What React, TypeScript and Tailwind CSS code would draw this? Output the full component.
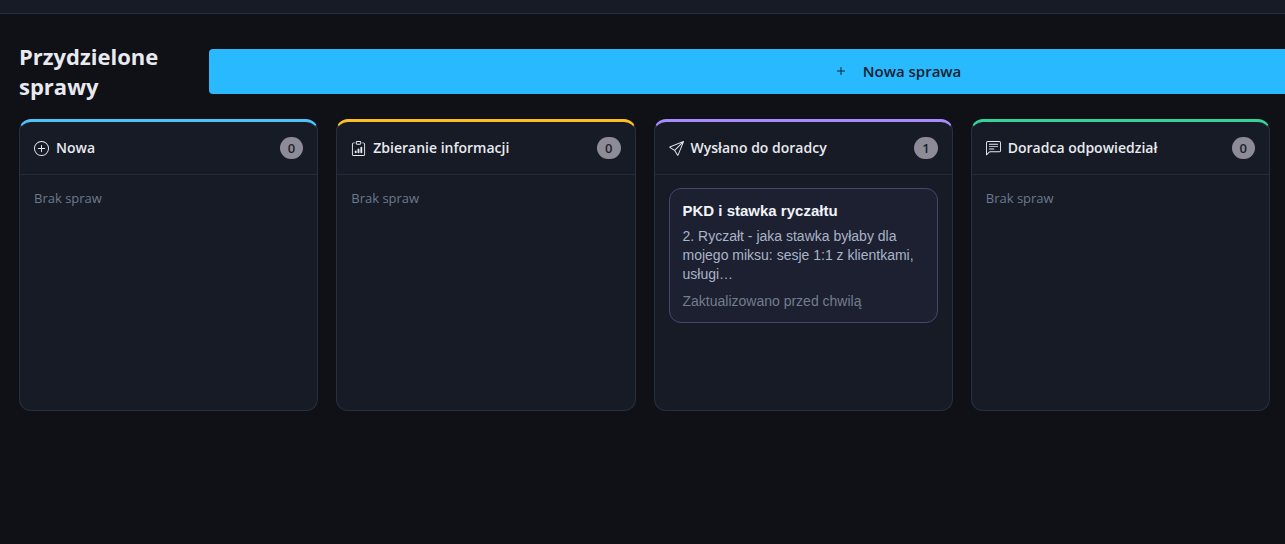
import { BsChatLeftText, BsClipboardData, BsPlus, BsPlusCircle, BsSend } from "react-icons/bs";
import type { IconType } from "react-icons";

interface Sprawa {
  id: string;
  tytul: string;
  opis: string;
  aktualizacja: string;
}

interface Kolumna {
  label: string;
  icon: IconType;
  accent: string;
  sprawy: Sprawa[];
}

const KOLUMNY: Kolumna[] = [
  { label: "Nowa", icon: BsPlusCircle, accent: "border-t-[#4fc3f7]", sprawy: [] },
  { label: "Zbieranie informacji", icon: BsClipboardData, accent: "border-t-[#fbbf24]", sprawy: [] },
  {
    label: "Wysłano do doradcy",
    icon: BsSend,
    accent: "border-t-[#a78bfa]",
    sprawy: [
      {
        id: "pkd",
        tytul: "PKD i stawka ryczałtu",
        opis: "2. Ryczałt - jaka stawka byłaby dla mojego miksu: sesje 1:1 z klientkami, usługi…",
        aktualizacja: "Zaktualizowano przed chwilą",
      },
    ],
  },
  { label: "Doradca odpowiedział", icon: BsChatLeftText, accent: "border-t-[#34d399]", sprawy: [] },
];

function KartaSprawy({ sprawa }: { sprawa: Sprawa }) {
  return (
    <button
      type="button"
      className="block w-full rounded-xl border border-[#4a4570] bg-[#1c2030] px-[13px] pt-3 pb-[11px] text-left font-['Liberation_Sans',sans-serif] text-sm"
    >
      <span className="block text-[15px] leading-5 font-bold text-[#f1f3f8]">{sprawa.tytul}</span>
      <span className="mt-1.5 block leading-[19px] text-[#a9b4c8]">{sprawa.opis}</span>
      <span className="mt-2 block leading-[19px] text-[#737d8f]">{sprawa.aktualizacja}</span>
    </button>
  );
}

function KolumnaSpraw({ kolumna }: { kolumna: Kolumna }) {
  return (
    <section
      className={`min-h-[292px] rounded-xl border border-t-[3px] border-[#273040] bg-[#171b25] ${kolumna.accent}`}
    >
      <header className="flex items-center justify-between border-b border-[#232b3b] px-[14px] py-[15px]">
        <h2 className="flex items-center gap-[7px] text-sm leading-[22px] font-semibold whitespace-nowrap text-[#e8eaf0]">
          <kolumna.icon size={15} className="shrink-0" />
          {kolumna.label}
        </h2>
        <span className="rounded-full bg-[#8d8b98] px-2 text-[13px] leading-[22px] font-semibold text-[#1d1f2a]">
          {kolumna.sprawy.length}
        </span>
      </header>
      <div className="flex flex-col gap-3 px-[14px] py-[13px]">
        {kolumna.sprawy.length === 0 && (
          <p className="text-[13px] leading-5 text-[#6b7a8f]">Brak spraw</p>
        )}
        {kolumna.sprawy.map((sprawa) => (
          <KartaSprawy key={sprawa.id} sprawa={sprawa} />
        ))}
      </div>
    </section>
  );
}

export default function App() {
  return (
    <div className="min-h-screen overflow-x-hidden bg-[#101116] font-['Open_Sans',sans-serif]">
      <div className="h-[14px] border-b border-[#273040] bg-[#171b25]" />
      <main className="pt-[27px] pr-[15px] pl-[19px]">
        <div className="flex items-center gap-4">
          <h1 className="w-[174px] shrink-0 text-[22px] leading-[30px] font-bold text-[#e8eaf0]">
            Przydzielone sprawy
          </h1>
          {/* wider than the row, runs past the right edge */}
          <button
            type="button"
            className="flex h-[45px] w-[110%] shrink-0 items-center justify-center gap-[14px] rounded-[4px] bg-[#29b9ff] text-[15px] font-semibold text-[#16202c]"
          >
            <BsPlus size={16} />
            Nowa sprawa
          </button>
        </div>
        <div className="mt-[18px] grid grid-cols-4 gap-[18px]">
          {KOLUMNY.map((kolumna) => (
            <KolumnaSpraw key={kolumna.label} kolumna={kolumna} />
          ))}
        </div>
      </main>
    </div>
  );
}
